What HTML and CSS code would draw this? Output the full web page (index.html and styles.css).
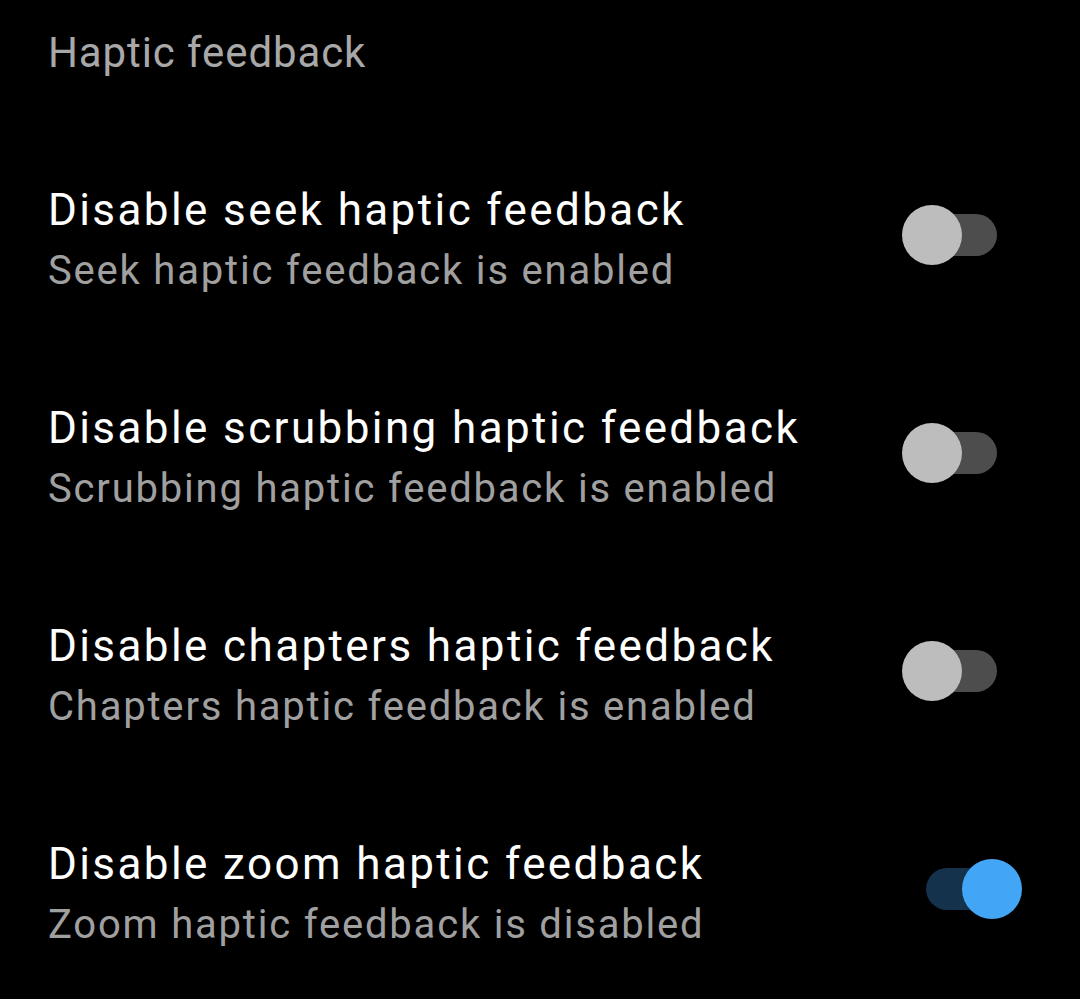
FILE: index.html
```html
<!DOCTYPE html>
<html lang="en">
<head>
<meta charset="utf-8">
<title>Haptic feedback</title>
<link rel="stylesheet" href="styles.css">
</head>
<body>
<main class="screen">
  <h2 class="category">Haptic feedback</h2>
  <ul class="prefs">
    <li class="pref">
      <div class="pref-text">
        <div class="pref-title">Disable seek haptic feedback</div>
        <div class="pref-summary">Seek haptic feedback is enabled</div>
      </div>
      <span class="switch"><span class="track"></span><span class="thumb"></span></span>
    </li>
    <li class="pref">
      <div class="pref-text">
        <div class="pref-title">Disable scrubbing haptic feedback</div>
        <div class="pref-summary">Scrubbing haptic feedback is enabled</div>
      </div>
      <span class="switch"><span class="track"></span><span class="thumb"></span></span>
    </li>
    <li class="pref">
      <div class="pref-text">
        <div class="pref-title">Disable chapters haptic feedback</div>
        <div class="pref-summary">Chapters haptic feedback is enabled</div>
      </div>
      <span class="switch"><span class="track"></span><span class="thumb"></span></span>
    </li>
    <li class="pref">
      <div class="pref-text">
        <div class="pref-title">Disable zoom haptic feedback</div>
        <div class="pref-summary">Zoom haptic feedback is disabled</div>
      </div>
      <span class="switch on"><span class="track"></span><span class="thumb"></span></span>
    </li>
  </ul>
</main>
</body>
</html>
```
FILE: styles.css
```css
html, body {
  margin: 0;
  padding: 0;
  background: #000;
}
body {
  font-family: Roboto, "Open Sans", sans-serif;
  width: 1080px;
  height: 999px;
  overflow: hidden;
}
.screen {
  padding-left: 48px;
}
.category {
  margin: 0 0 45px 0;
  padding-top: 25px;
  font-size: 42px;
  line-height: 56px;
  font-weight: 400;
  letter-spacing: 0.9px;
  color: #a8a8a8;
}
.prefs {
  list-style: none;
  margin: 0;
  padding: 0;
}
.pref {
  display: flex;
  align-items: center;
  height: 218px;
}
.pref-text {
  flex: 1;
  padding-top: 9px;
}
.pref-title {
  font-size: 44px;
  line-height: 56px;
  letter-spacing: 2.4px;
  color: #fff;
}
.pref-summary {
  font-size: 40px;
  line-height: 52px;
  margin-top: 7px;
  letter-spacing: 1.8px;
  color: #a0a0a0;
}
.switch {
  position: relative;
  width: 120px;
  height: 60px;
  margin-right: 58px;
}
.track {
  position: absolute;
  left: 24px;
  top: 9px;
  width: 71px;
  height: 42px;
  border-radius: 21px;
  background: #4d4d4d;
}
.thumb {
  position: absolute;
  left: 0;
  top: 0;
  width: 60px;
  height: 60px;
  border-radius: 50%;
  background: #bdbdbd;
}
.switch.on .track {
  background: #15324d;
}
.switch.on .thumb {
  left: 60px;
  background: #42a5f5;
}
```
